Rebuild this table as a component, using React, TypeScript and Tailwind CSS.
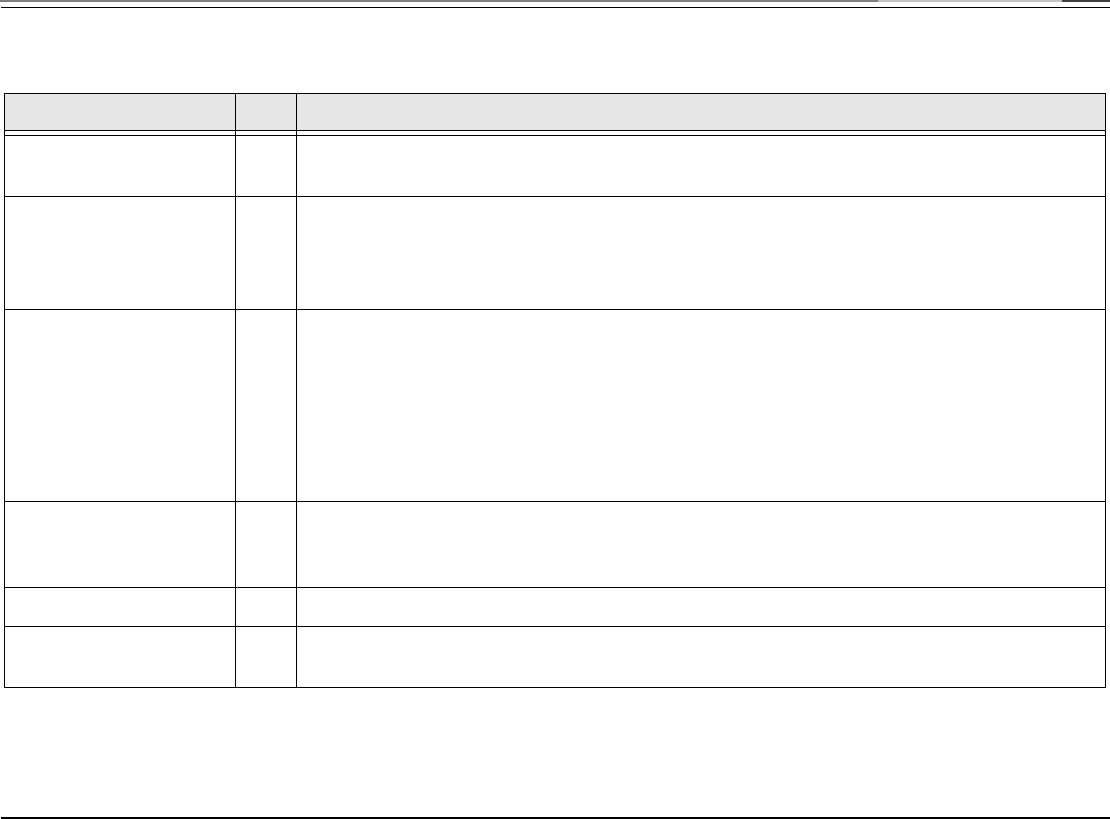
const rows = [60, 112, 191, 85, 38, 60];

function Row({ h, head, last }: { h: number; head?: boolean; last?: boolean }) {
  const bg = head ? "bg-[#e6e6e6]" : "bg-white";
  return (
    <div
      className={`flex border-t border-black ${last ? "border-b" : ""}`}
      style={{ height: h }}
    >
      <div className={`w-[231px] shrink-0 border-r border-black ${bg}`} />
      <div className={`w-[61px] shrink-0 border-r border-black ${bg}`} />
      <div className={`flex-1 ${bg}`} />
    </div>
  );
}

export default function App() {
  return (
    <div className="relative h-[819px] w-[1110px] overflow-hidden bg-white" style={{ fontFamily: "'Liberation Sans', Arial, sans-serif" }}>
      {/* Header rule */}
      <div className="flex h-[2px]">
        <div className="w-[878px] bg-[#808080]" />
        <div className="w-[184px] bg-[#c4c4c4]" />
        <div className="flex-1 bg-[#404040]" />
      </div>
      <div className="ml-px mt-[5px] h-px bg-black" />

      {/* Table */}
      <div className="ml-[4px] mt-[85px] w-[1102px] border-x border-black">
        <Row h={37} head />
        {/* gap between double line */}
        <div className="flex h-[5px] border-t border-black">
          <div className="w-[231px] shrink-0 border-r border-black" />
          <div className="w-[61px] shrink-0 border-r border-black" />
          <div className="flex-1" />
        </div>
        {rows.map((h, i) => (
          <Row key={i} h={i === rows.length - 1 ? h + 2 : h + 1} last={i === rows.length - 1} />
        ))}
      </div>

      {/* Footer rule */}
      <div className="absolute bottom-0 left-px right-0 h-[2px] bg-black" />
    </div>
  );
}
